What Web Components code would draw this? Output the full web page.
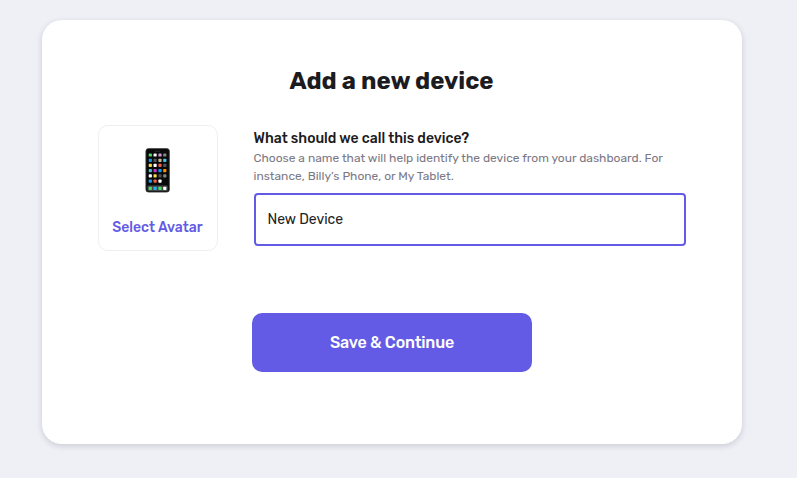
<!DOCTYPE html>
<html lang="en">
<head>
<meta charset="utf-8">
<title>Add a new device</title>
<style>
  body{
    margin: 0;
    padding: 20px 55px 34px 42px;
    background: #eff0f6;
    color: #1c1b20;
    font-family: Rubik, Roboto, "Liberation Sans", sans-serif;
  }
</style>
</head>
<body>
<device-card heading="Add a new device">
  <avatar-picker slot="avatar" label="Select Avatar"></avatar-picker>
  <name-field slot="field" label="What should we call this device?" value="New Device">Choose a name that will help identify the device from your dashboard. For<br>instance, Billy’s Phone, or My Tablet.</name-field>
  <primary-button slot="action">Save &amp; Continue</primary-button>
</device-card>

<script>
function define(name, html, setup){
  const template = document.createElement('template');
  template.innerHTML = html;
  window.customElements.define(name, class extends HTMLElement {
    constructor() {
      super();
      this.attachShadow({ mode: 'open' });
      this.shadowRoot.appendChild(template.content.cloneNode(true));
    }

    connectedCallback() {
      if (setup) setup(this, this.shadowRoot)
    }
  });
}

define("device-card", `
  <style>
    :host{
      display: block;
      box-sizing: border-box;
      width: 700px;
      height: 424px;
      padding: 44px 56px 0;
      background: #fff;
      border-radius: 20px;
      box-shadow: 0 2px 6px rgba(20, 20, 43, .16);
    }
    h1{
      margin: 0 1px 0 0;
      font-size: 24px;
      line-height: 34px;
      font-weight: 700;
      text-align: center;
    }
    #row{
      display: flex;
      gap: 36px;
      margin-top: 27px;
    }
    #action{
      display: flex;
      justify-content: center;
      margin-top: 62px;
    }
  </style>
  <h1></h1>
  <div id="row">
    <slot name="avatar"></slot>
    <slot name="field"></slot>
  </div>
  <div id="action"><slot name="action"></slot></div>
`, (el, root) => {
  root.querySelector("h1").textContent = el.getAttribute("heading")
});

define("phone-icon", `
  <style>
    :host{ display: block; width: 25px; height: 45px; margin-right: 1px; }
    svg{ display: block; }
  </style>
  <svg width="25" height="45" viewBox="0 0 25 45">
    <rect x=".9" y=".6" width="23.5" height="43.5" rx="2.6" fill="#080909" stroke="#454545" stroke-width=".8"/>
    <path d="M10 3.2h5" stroke="#303030" stroke-width=".8"/>
    <rect x="2.5" y="37.5" width="20.2" height="5.5" rx=".8" fill="#454746"/>
    <g id="apps"></g>
  </svg>
`, (el, root) => {
  const columns = [5.3, 10.1, 15, 19.8]
  const rows = [
    [7, "#4cd964", "#f5f5f5", "#cf94da", "#858585"],
    [12.3, "#1695e8", "#555555", "#cbb596", "#45c4ed"],
    [17.3, "#ffd83d", "#ffffff", "#f05b4f", "#555555"],
    [22.6, "#45bfd2", "#c838c8", "#169bea", "#ff9000"],
    [27.9, "#ffffff", "#f4dc4e", "#505050", "#858585"],
    [33.1, "#169bea", "#f05b4f", "#ffffff"],
    [40.3, "#4cd964", "#20b5f1", "#4cd964", "#ffffff"],
  ]
  root.getElementById("apps").innerHTML = rows.map(([y, ...fills]) =>
    fills.map((fill, i) => `<rect x="${columns[i] - 1.6}" y="${y - 1.6}" width="3.2" height="3.2" rx=".7" fill="${fill}"/>`).join("")
  ).join("")
});

define("avatar-picker", `
  <style>
    :host{
      display: flex;
      flex-direction: column;
      align-items: center;
      box-sizing: border-box;
      width: 120px;
      height: 126px;
      padding-top: 22px;
      border: 1px solid #efeff1;
      border-radius: 10px;
    }
    span{
      margin: 25px 1.2px 0 0;
      color: #635be5;
      font-size: 14px;
      line-height: 20px;
      font-weight: 500;
      white-space: nowrap;
    }
  </style>
  <phone-icon></phone-icon>
  <span></span>
`, (el, root) => {
  root.querySelector("span").textContent = el.getAttribute("label")
});

define("name-field", `
  <style>
    :host{ display: block; width: 432px; padding-top: 4px; }
    label{
      display: block;
      margin-left: -0.5px;
      font-size: 14px;
      line-height: 20px;
      font-weight: 500;
    }
    p{
      margin: 0 0 8px -0.5px;
      color: #7b7885;
      font-size: 12px;
      line-height: 18px;
      white-space: nowrap;
    }
    input{
      display: block;
      box-sizing: border-box;
      width: 100%;
      height: 53px;
      padding: 0 11.5px;
      border: 2px solid #635be5;
      border-radius: 4px;
      outline: none;
      background: #fff;
      color: #222;
      font: 14px/20px Rubik, Roboto, "Liberation Sans", sans-serif;
    }
  </style>
  <label for="name"></label>
  <p><slot></slot></p>
  <input id="name" type="text">
`, (el, root) => {
  root.querySelector("label").textContent = el.getAttribute("label")
  root.getElementById("name").value = el.getAttribute("value") || ""
});

define("primary-button", `
  <style>
    :host{ display: block; }
    button{
      display: block;
      width: 280px;
      height: 59px;
      padding: 0;
      border: 0;
      border-radius: 10px;
      background: #635be5;
      color: #fff;
      font: 500 16px/24px Rubik, Roboto, "Liberation Sans", sans-serif;
      letter-spacing: -0.18px;
    }
  </style>
  <button type="button"><slot></slot></button>
`);
</script>
</body>
</html>
